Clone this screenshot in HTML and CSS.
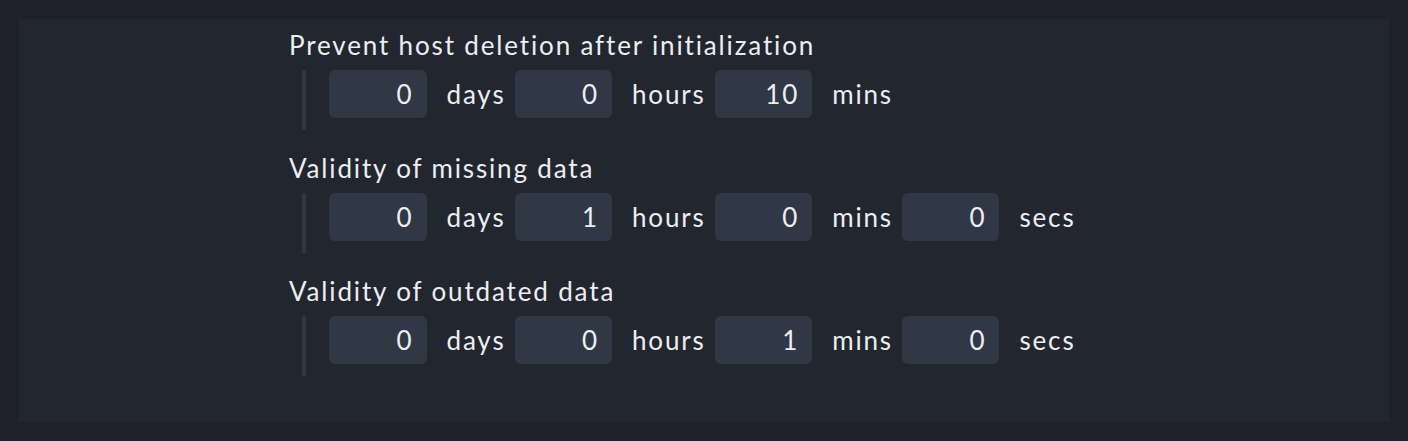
FILE: index.html
```html
<!DOCTYPE html>
<html lang="en">
<head>
    <meta charset="UTF-8">
    <title>Timing settings</title>
    <link rel="stylesheet" href="styles.css">
</head>
<body>

<div class="panel">
    <div class="setting">
        <div class="title">Prevent host deletion after initialization</div>
        <div class="fields">
            <input class="num" type="text" value="0"><span class="unit">days</span>
            <input class="num" type="text" value="0"><span class="unit">hours</span>
            <input class="num" type="text" value="10"><span class="unit">mins</span>
        </div>
    </div>
    <div class="setting">
        <div class="title">Validity of missing data</div>
        <div class="fields">
            <input class="num" type="text" value="0"><span class="unit">days</span>
            <input class="num" type="text" value="1"><span class="unit">hours</span>
            <input class="num" type="text" value="0"><span class="unit">mins</span>
            <input class="num" type="text" value="0"><span class="unit">secs</span>
        </div>
    </div>
    <div class="setting">
        <div class="title">Validity of outdated data</div>
        <div class="fields">
            <input class="num" type="text" value="0"><span class="unit">days</span>
            <input class="num" type="text" value="0"><span class="unit">hours</span>
            <input class="num" type="text" value="1"><span class="unit">mins</span>
            <input class="num" type="text" value="0"><span class="unit">secs</span>
        </div>
    </div>
</div>

</body>
</html>
```

FILE: styles.css
```css
body {
    margin: 0;
    padding: 19px;
    background-color: #1e2129;
    font-family: Lato, "Open Sans", sans-serif;
    color: #eceef1;
}

.panel {
    background-color: #22272f;
    height: 403px;
    box-sizing: border-box;
    padding: 12px 0 0 270px;
}

.setting {
    margin-bottom: 24px;
}

.title {
    font-size: 26px;
    line-height: 28px;
    letter-spacing: 1.85px;
    margin-bottom: 11px;
}

.fields {
    display: flex;
    align-items: center;
    margin-left: 13px;
    padding: 0 0 12px 23px;
    border-left: 4px solid #2f3843;
    height: 48px;
}

.num {
    width: 97.5px;
    height: 48px;
    box-sizing: border-box;
    border: none;
    border-radius: 6px;
    background-color: #2f3844;
    color: #eceef1;
    font-family: inherit;
    font-size: 26px;
    text-align: right;
    padding: 0 13px;
    outline: none;
    letter-spacing: 1.85px;
}

.unit {
    font-size: 26px;
    letter-spacing: 1.85px;
    padding: 0 9px 0 20px;
}
```
